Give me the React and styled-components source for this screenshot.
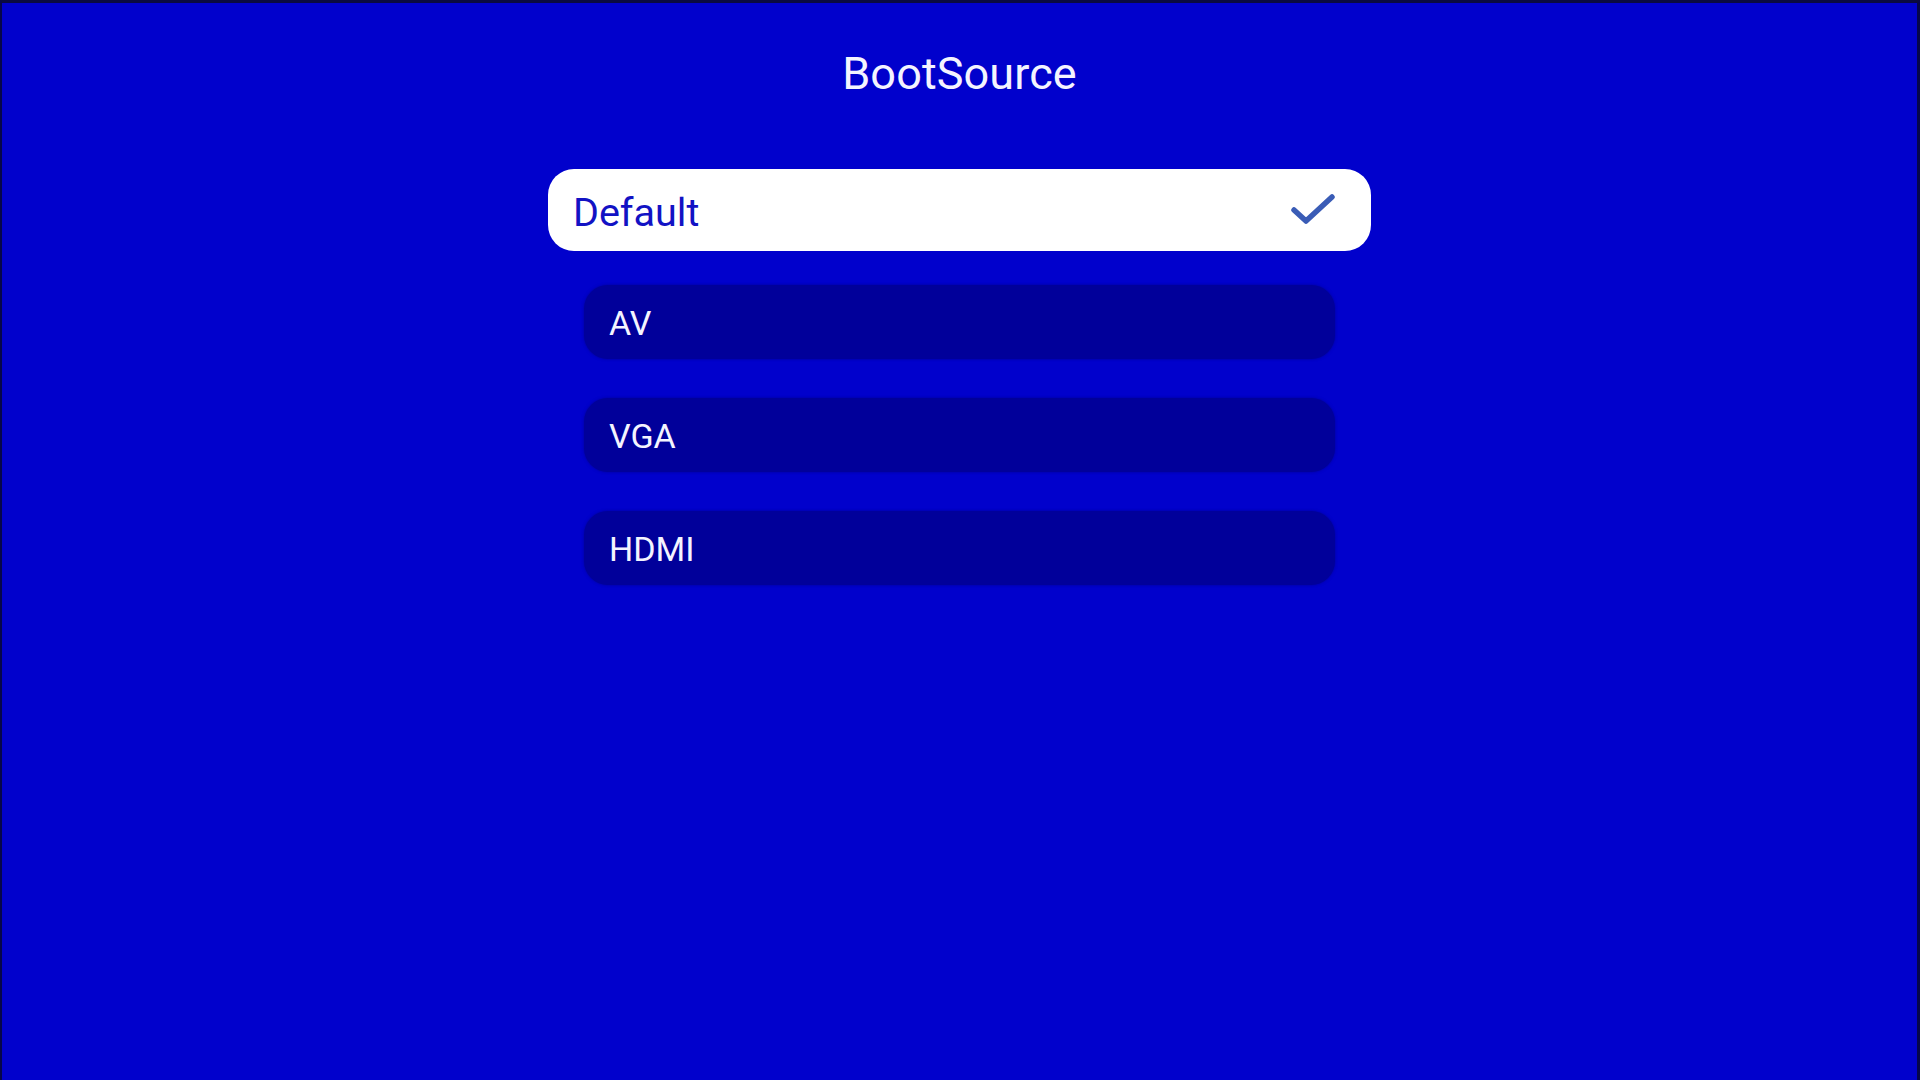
import React from "react";
import styled, { createGlobalStyle } from "styled-components";

const Global = createGlobalStyle`
  html, body { margin: 0; padding: 0; background: #0000cc; }
  body { font-family: Roboto, "Noto Sans", "Liberation Sans", sans-serif; }
  * { box-sizing: border-box; }
`;

const Screen = styled.div`
  width: 1920px;
  height: 1080px;
  background: #0101cc;
  border-top: 3px solid #0a0a40;
  border-left: 2px solid #06064a;
  border-right: 3px solid #06064a;
  display: flex;
  flex-direction: column;
  align-items: center;
  overflow: hidden;
`;

const Title = styled.h1`
  margin: 41px 0 0;
  font-size: 45px;
  font-weight: 400;
  line-height: 60px;
  color: #f4f4ff;
  letter-spacing: 0.1px;
`;

const List = styled.div`
  margin-top: 68px;
  display: flex;
  flex-direction: column;
  align-items: center;
  gap: 39px;
`;

const Item = styled.div`
  display: flex;
  align-items: center;
  justify-content: space-between;
  width: ${(p) => (p.$active ? "823px" : "751px")};
  height: ${(p) => (p.$active ? "82px" : "74px")};
  margin: ${(p) => (p.$active ? "-3px 0 -5px" : "0")};
  padding: ${(p) => (p.$active ? "0 36px 0 25px" : "0 25px")};
  border-radius: ${(p) => (p.$active ? "26px" : "24px")};
  background: ${(p) => (p.$active ? "#ffffff" : "#01009a")};
  box-shadow: ${(p) => (p.$active ? "none" : "0 0 3px rgba(1, 0, 140, 0.8)")};
  color: ${(p) => (p.$active ? "#1212c4" : "#f4f4ff")};
  font-size: ${(p) => (p.$active ? "39.5px" : "34px")};
  font-weight: 400;
`;

const Label = styled.span`
  line-height: 1;
  padding-top: ${(p) => (p.$active ? "5px" : "2px")};
`;

const Check = () => (
  <svg width="44" height="32" viewBox="0 0 44 32" fill="none">
    <path
      d="M3 16 L15 27 L41 3"
      stroke="#3a5cb6"
      strokeWidth="5.5"
      strokeLinecap="round"
      strokeLinejoin="round"
    />
  </svg>
);

const items = ["Default", "AV", "VGA", "HDMI"];

export default function App() {
  return (
    <>
      <Global />
      <Screen>
        <Title>BootSource</Title>
        <List>
          {items.map((it, i) => (
            <Item key={it} $active={i === 0}>
              <Label $active={i === 0}>{it}</Label>
              {i === 0 && <Check />}
            </Item>
          ))}
        </List>
      </Screen>
    </>
  );
}
